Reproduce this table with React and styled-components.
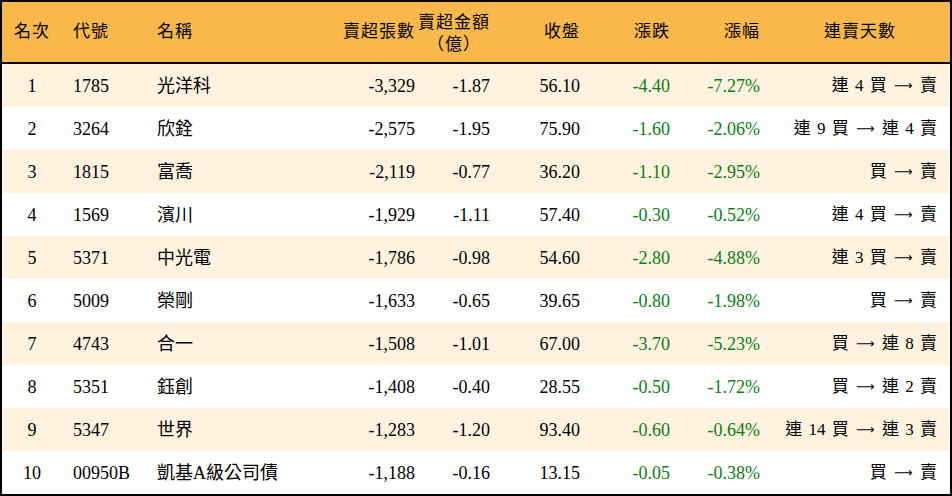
import React from 'react';
import styled, {createGlobalStyle} from 'styled-components';

const GlobalStyle = createGlobalStyle`
  html, body {
    margin: 0;
    padding: 0;
    background: #fff;
  }
  body {
    font-family: "Liberation Serif", "Noto Sans CJK TC", serif;
  }
`;

const COLS = '60px 85px 173px 105px 75px 90px 90px 90px 180px';

const Board = styled.div`
  width: 952px;
  box-sizing: border-box;
  border: 2px solid #000;
  background: #fff;
`;

const HeadRow = styled.div`
  display: grid;
  grid-template-columns: ${COLS};
  height: 60px;
  background: #f9b84b;
  border-bottom: 2px solid #000;
`;

const Row = styled.div`
  display: grid;
  grid-template-columns: ${COLS};
  height: 43px;
  background: ${p => (p.$striped ? '#fff3e0' : '#fff')};
`;

const HeadCell = styled.div`
  display: flex;
  align-items: center;
  justify-content: ${p => p.$align || 'flex-end'};
  padding: ${p => p.$pad || '0 10px'};
  font-size: 17px;
  line-height: 22px;
  letter-spacing: 1px;
  color: #000;
  white-space: nowrap;
`;

const Stack = styled.div`
  display: flex;
  flex-direction: column;
  align-items: center;
  margin-top: 3px;
`;

const Cell = styled.div`
  display: flex;
  align-items: center;
  justify-content: ${p => p.$align || 'flex-end'};
  padding: ${p => p.$pad || '0 10px'};
  font-size: 18px;
  line-height: 20px;
  color: ${p => (p.$green ? '#0a7d16' : '#000')};
  white-space: pre;
`;

const Streak = styled(Cell)`
  padding-right: 13px;
  font-size: 17px;
  word-spacing: 2px;
`;

const Arrow = styled.span`
  font-family: "DejaVu Sans", sans-serif;
  font-size: 13px;
  margin: 0 1px;
`;

const rows = [
  ['1', '1785', '光洋科', '-3,329', '-1.87', '56.10', '-4.40', '-7.27%', '連 4 買 → 賣'],
  ['2', '3264', '欣銓', '-2,575', '-1.95', '75.90', '-1.60', '-2.06%', '連 9 買 → 連 4 賣'],
  ['3', '1815', '富喬', '-2,119', '-0.77', '36.20', '-1.10', '-2.95%', '買 → 賣'],
  ['4', '1569', '濱川', '-1,929', '-1.11', '57.40', '-0.30', '-0.52%', '連 4 買 → 賣'],
  ['5', '5371', '中光電', '-1,786', '-0.98', '54.60', '-2.80', '-4.88%', '連 3 買 → 賣'],
  ['6', '5009', '榮剛', '-1,633', '-0.65', '39.65', '-0.80', '-1.98%', '買 → 賣'],
  ['7', '4743', '合一', '-1,508', '-1.01', '67.00', '-3.70', '-5.23%', '買 → 連 8 賣'],
  ['8', '5351', '鈺創', '-1,408', '-0.40', '28.55', '-0.50', '-1.72%', '買 → 連 2 賣'],
  ['9', '5347', '世界', '-1,283', '-1.20', '93.40', '-0.60', '-0.64%', '連 14 買 → 連 3 賣'],
  ['10', '00950B', '凱基A級公司債', '-1,188', '-0.16', '13.15', '-0.05', '-0.38%', '買 → 賣'],
];

// split the streak text so the arrow gets a long, thin glyph
const renderStreak = (text) => {
  const [from, to] = text.split(' → ');
  return <>{from + ' '}<Arrow>⟶</Arrow>{' ' + to}</>;
};

const App = () => {
  return (
    <>
      <GlobalStyle/>
      <Board>
        <HeadRow>
          <HeadCell $align="center" $pad="0">名次</HeadCell>
          <HeadCell $align="flex-start" $pad="0 0 0 11px">代號</HeadCell>
          <HeadCell $align="flex-start">名稱</HeadCell>
          <HeadCell>賣超張數</HeadCell>
          <HeadCell $pad="0 10px 0 0">
            <Stack>
              <span>賣超金額</span>
              <span>（億）</span>
            </Stack>
          </HeadCell>
          <HeadCell>收盤</HeadCell>
          <HeadCell>漲跌</HeadCell>
          <HeadCell>漲幅</HeadCell>
          <HeadCell $align="center" $pad="0">連賣天數</HeadCell>
        </HeadRow>
        {rows.map((r, i) => (
          <Row key={r[1]} $striped={i % 2 === 0}>
            <Cell $align="center" $pad="0">{r[0]}</Cell>
            <Cell $align="flex-start" $pad="0 0 0 11px">{r[1]}</Cell>
            <Cell $align="flex-start">{r[2]}</Cell>
            <Cell>{r[3]}</Cell>
            <Cell>{r[4]}</Cell>
            <Cell>{r[5]}</Cell>
            <Cell $green>{r[6]}</Cell>
            <Cell $green>{r[7]}</Cell>
            <Streak>{renderStreak(r[8])}</Streak>
          </Row>
        ))}
      </Board>
    </>
  );
};

export default App;
